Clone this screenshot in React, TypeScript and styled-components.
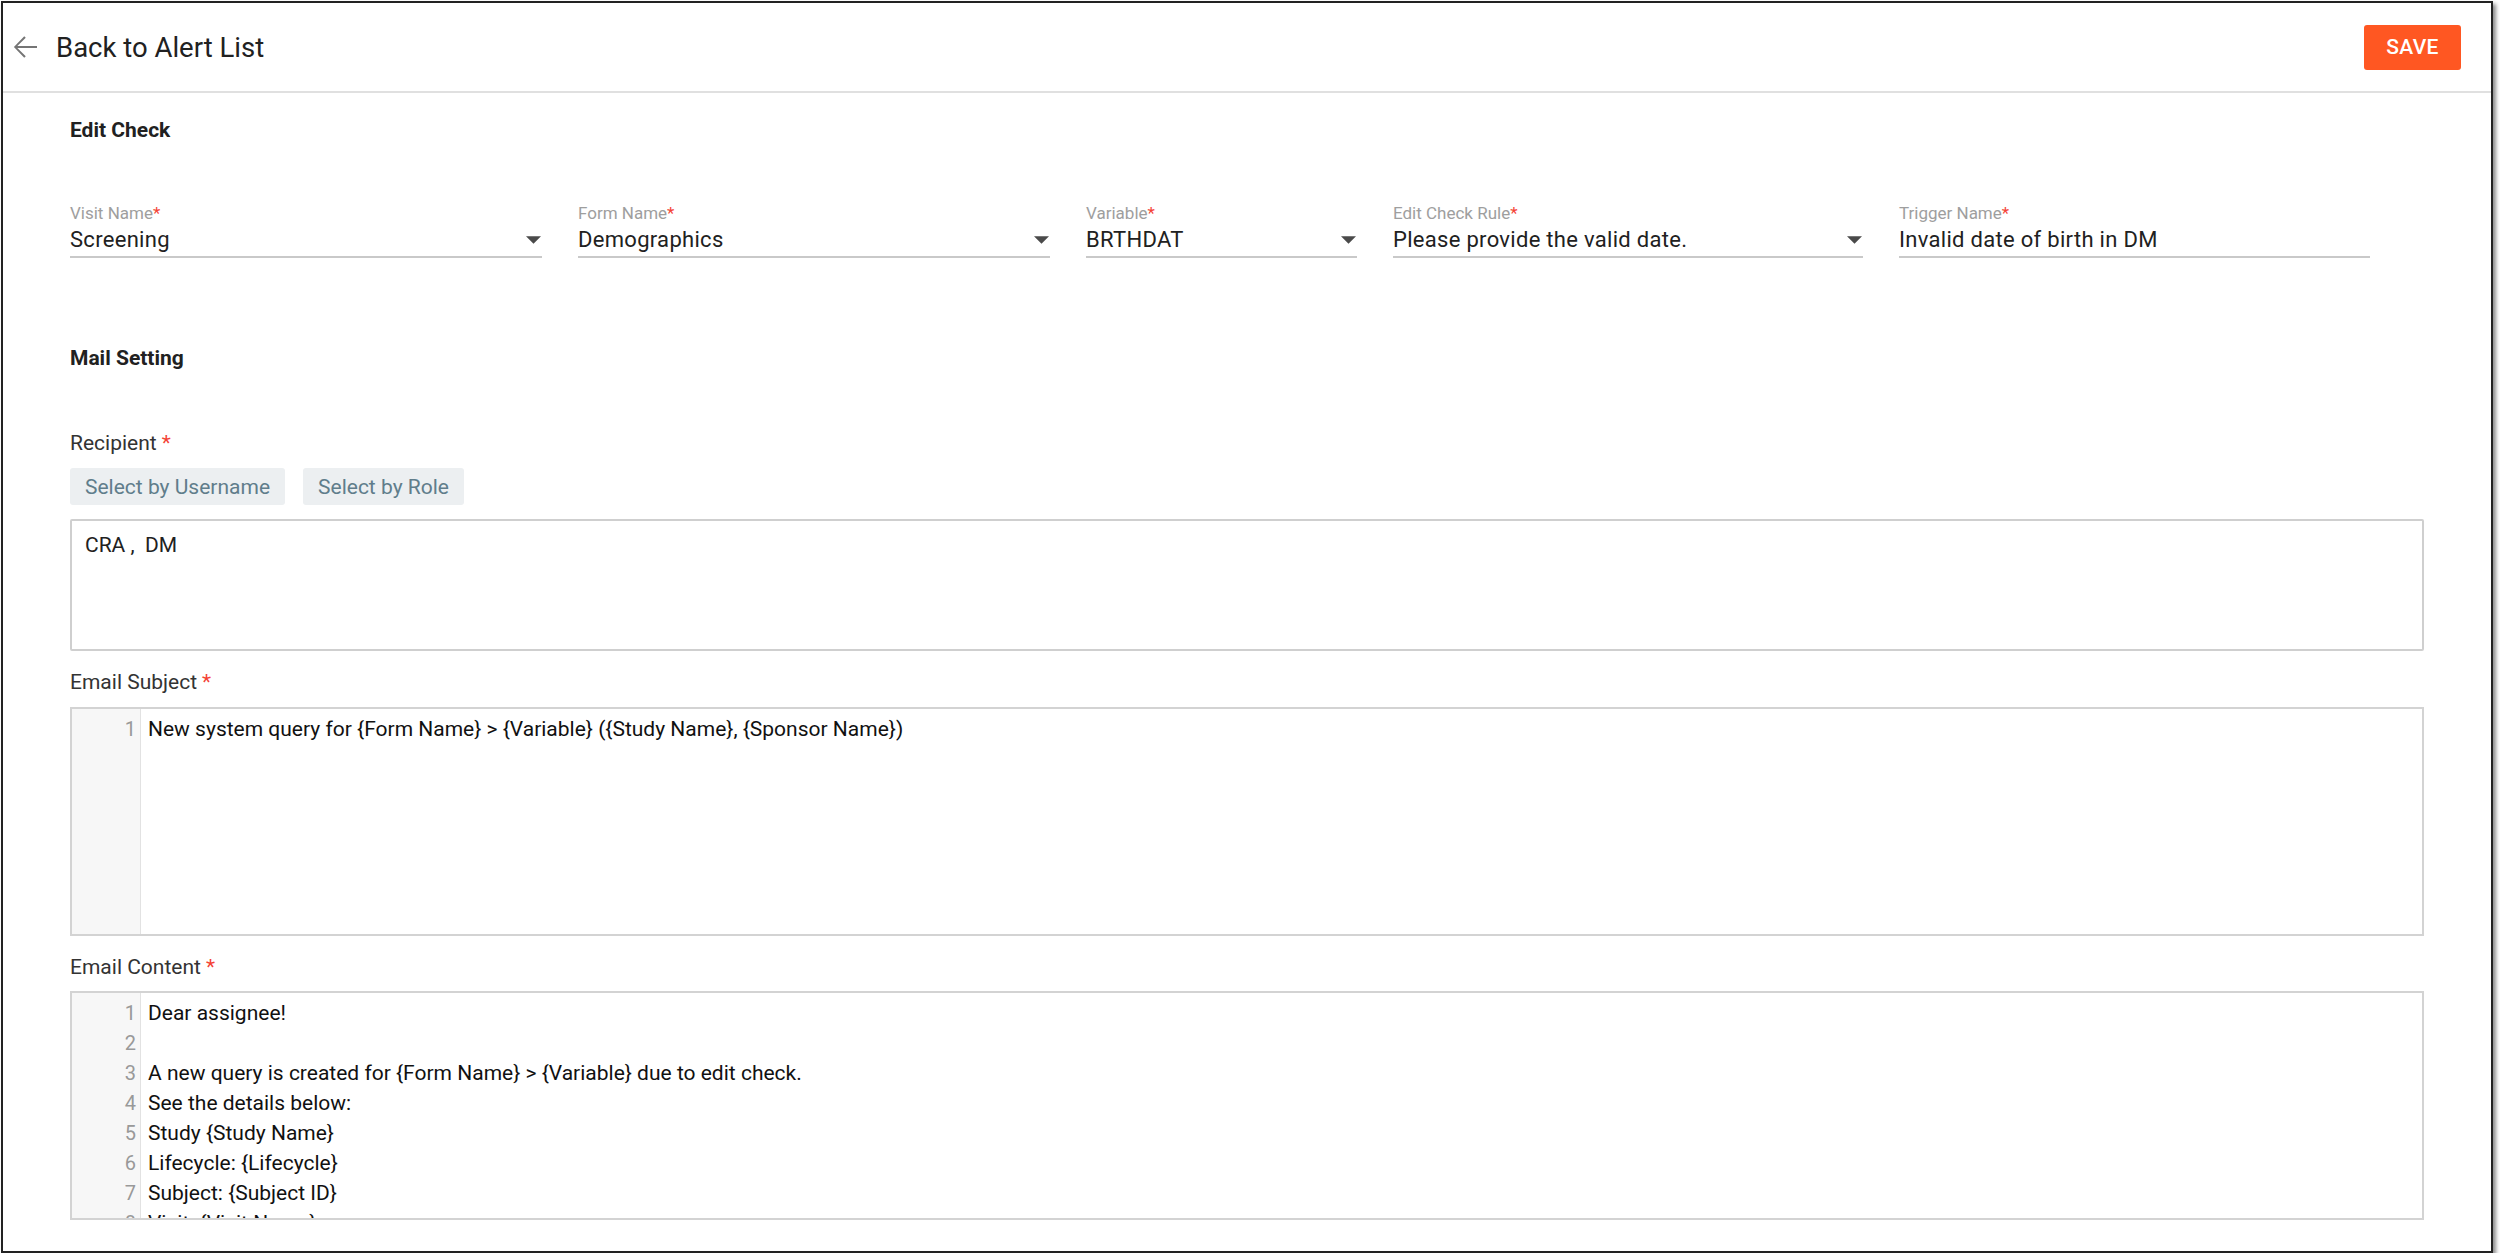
import styled, { createGlobalStyle } from "styled-components";

const GlobalStyle = createGlobalStyle`
  body {
    margin: 0;
    background: #ffffff;
    font-family: Roboto, "Liberation Sans", Arial, sans-serif;
    color: #212121;
  }
`;

const Frame = styled.div`
  box-sizing: border-box;
  width: 2492px;
  height: 1252px;
  margin: 1px 0 0 1px;
  border: 2px solid #222;
  box-shadow: 3px 3px 4px rgba(0, 0, 0, 0.45);
  background: #fff;
  overflow: hidden;
  display: flex;
  flex-direction: column;
`;

const Header = styled.header`
  box-sizing: border-box;
  height: 90px;
  flex-shrink: 0;
  display: flex;
  align-items: center;
  justify-content: space-between;
  padding: 0 30px 0 4px;
  border-bottom: 2px solid #e0e0e0;
`;

const BackLink = styled.a`
  display: flex;
  align-items: center;
  gap: 13px;
  font-size: 27.5px;
  color: #212121;
  text-decoration: none;
  cursor: pointer;
`;

const SaveButton = styled.button`
  width: 97px;
  height: 45px;
  border: none;
  border-radius: 3px;
  background: #ff5722;
  color: #fff;
  font-family: inherit;
  font-size: 21px;
  font-weight: 500;
  letter-spacing: 0.3px;
  cursor: pointer;
`;

const Body = styled.main`
  padding: 0 67px;
  display: flex;
  flex-direction: column;
`;

const SectionTitle = styled.h2<{ $top: number }>`
  margin: ${(p) => p.$top}px 0 0;
  font-size: 21px;
  line-height: 24px;
  font-weight: 700;
  color: #212121;
`;

const FieldRow = styled.div`
  display: flex;
  gap: 36px;
  margin-top: 61px;
`;

const Field = styled.div<{ $width: number }>`
  width: ${(p) => p.$width}px;
  display: flex;
  flex-direction: column;
`;

const FieldLabel = styled.label`
  font-size: 17px;
  line-height: 20px;
  color: #9e9e9e;
`;

const Star = styled.span`
  color: #f44336;
`;

const FieldValue = styled.div`
  box-sizing: border-box;
  height: 33px;
  margin-top: 2px;
  display: flex;
  align-items: center;
  justify-content: space-between;
  font-size: 22px;
  letter-spacing: 0.3px;
  color: #212121;
  border-bottom: 2px solid #c9c9c9;
  padding-bottom: 2px;
`;

const Caret = styled.svg`
  width: 15px;
  height: 8px;
  margin-right: 1px;
  fill: #4a4a4a;
`;

const FormLabel = styled.div<{ $top: number }>`
  margin-top: ${(p) => p.$top}px;
  font-size: 21px;
  line-height: 26px;
  color: #333;

  ${Star} {
    margin-left: 5px;
  }
`;

const ButtonGroup = styled.div`
  display: flex;
  gap: 18px;
  margin-top: 12px;
`;

const PickButton = styled.button`
  height: 37px;
  padding: 0 15px;
  border: none;
  border-radius: 3px;
  background: #eceff1;
  color: #607d8b;
  font-family: inherit;
  font-size: 21px;
  cursor: pointer;
`;

const RecipientBox = styled.div`
  box-sizing: border-box;
  height: 132px;
  margin-top: 14px;
  padding: 9px 13px;
  border: 2px solid #cfcfcf;
  border-radius: 2px;
  font-size: 21px;
  line-height: 30px;
  white-space: pre;
  color: #212121;
`;

const Editor = styled.div<{ $top: number }>`
  box-sizing: border-box;
  height: 229px;
  margin-top: ${(p) => p.$top}px;
  border: 2px solid #d3d3d3;
  display: flex;
  overflow: hidden;
`;

const Gutter = styled.div`
  width: 68px;
  flex-shrink: 0;
  background: #f7f7f7;
  border-right: 1px solid #e2e2e2;
  padding-top: 5px;
`;

const LineNo = styled.div`
  height: 30px;
  line-height: 30px;
  padding-right: 4px;
  text-align: right;
  font-size: 20px;
  color: #999;
`;

const Code = styled.div`
  flex: 1;
  padding: 5px 0 0 7px;
`;

const CodeLine = styled.div`
  height: 30px;
  line-height: 30px;
  font-size: 21px;
  color: #111;
  white-space: pre;
`;

const fields = [
  { label: "Visit Name", value: "Screening", width: 472, select: true },
  { label: "Form Name", value: "Demographics", width: 472, select: true },
  { label: "Variable", value: "BRTHDAT", width: 271, select: true },
  { label: "Edit Check Rule", value: "Please provide the valid date.", width: 470, select: true },
  { label: "Trigger Name", value: "Invalid date of birth in DM", width: 471, select: false },
];

const subjectLines = [
  "New system query for {Form Name} > {Variable} ({Study Name}, {Sponsor Name})",
];

const contentLines = [
  "Dear assignee!",
  "",
  "A new query is created for {Form Name} > {Variable} due to edit check.",
  "See the details below:",
  "Study {Study Name}",
  "Lifecycle: {Lifecycle}",
  "Subject: {Subject ID}",
  "Visit: {Visit Name}",
];

const CodeEditor = ({ lines, top }: { lines: string[]; top: number }) => (
  <Editor $top={top}>
    <Gutter>
      {lines.map((_, i) => (
        <LineNo key={i}>{i + 1}</LineNo>
      ))}
    </Gutter>
    <Code>
      {lines.map((l, i) => (
        <CodeLine key={i}>{l}</CodeLine>
      ))}
    </Code>
  </Editor>
);

export default function App() {
  return (
    <>
      <GlobalStyle />
      <Frame>
        <Header>
          <BackLink>
            <svg width="36" height="36" viewBox="0 0 24 24" fill="#757575">
              <path d="M20 11.4H6.9l5.6-5.6-1-1L4.6 12l6.9 7.2 1-1-5.6-5.6H20z" />
            </svg>
            Back to Alert List
          </BackLink>
          <SaveButton>SAVE</SaveButton>
        </Header>

        <Body>
          <SectionTitle $top={25}>Edit Check</SectionTitle>
          <FieldRow>
            {fields.map((f) => (
              <Field key={f.label} $width={f.width}>
                <FieldLabel>
                  {f.label}
                  <Star>*</Star>
                </FieldLabel>
                <FieldValue>
                  <span>{f.value}</span>
                  {f.select && (
                    <Caret viewBox="0 0 10 5">
                      <path d="M0 0l5 5 5-5z" />
                    </Caret>
                  )}
                </FieldValue>
              </Field>
            ))}
          </FieldRow>

          <SectionTitle $top={88}>Mail Setting</SectionTitle>

          <FormLabel $top={60}>
            Recipient<Star>*</Star>
          </FormLabel>
          <ButtonGroup>
            <PickButton>Select by Username</PickButton>
            <PickButton>Select by Role</PickButton>
          </ButtonGroup>
          <RecipientBox>{"CRA ,  DM"}</RecipientBox>

          <FormLabel $top={18}>
            Email Subject<Star>*</Star>
          </FormLabel>
          <CodeEditor lines={subjectLines} top={12} />

          <FormLabel $top={18}>
            Email Content<Star>*</Star>
          </FormLabel>
          <CodeEditor lines={contentLines} top={11} />
        </Body>
      </Frame>
    </>
  );
}
